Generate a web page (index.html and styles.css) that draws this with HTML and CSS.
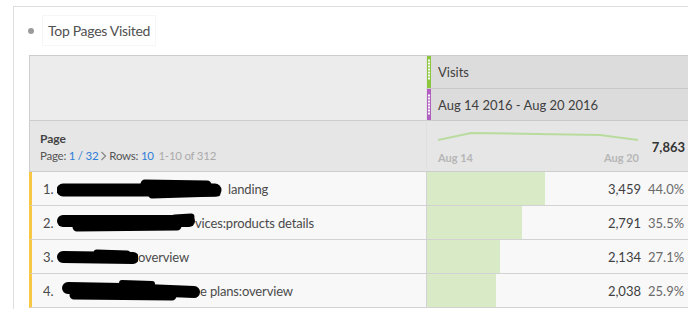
FILE: index.html
```html
<!DOCTYPE html>
<html>
<head>
<meta charset="utf-8">
<link rel="stylesheet" href="styles.css">
</head>
<body>
<div class="panel">
  <div class="title-row">
    <span class="dot"></span>
    <div class="title">Top Pages Visited</div>
  </div>
  <div class="table">
    <div class="hdr-left"></div>
    <div class="hdr-metric visits">
      <span class="cbar green"><i></i></span>
      <span>Visits</span>
    </div>
    <div class="hdr-metric seg">
      <span class="cbar purple"><i></i></span>
      <span>Aug 14 2016 - Aug 20 2016</span>
    </div>

    <div class="sum-left">
      <div class="dim">Page</div>
      <div class="pager">Page: <span class="link">1 / 32</span><svg class="chev" width="7" height="10" viewBox="0 0 7 10"><path d="M1.5 1 L5.5 5 L1.5 9" fill="none" stroke="#8a8a8a" stroke-width="1.3"/></svg>Rows: <span class="link">10</span> <span class="muted">1-10 of 312</span></div>
    </div>
    <div class="sum-right">
      <div class="spark">
        <svg width="201" height="12" viewBox="0 0 201 12"><polyline points="0,10 33,3 98,4 162,5 200,10" fill="none" stroke="#b9dc9e" stroke-width="2"/></svg>
        <div class="labels"><span>Aug 14</span><span>Aug 20</span></div>
      </div>
      <div class="total">7,863</div>
    </div>

    <div class="row-left">
      <span class="num">1.</span>
      <svg class="blob" width="171" height="24" viewBox="0 0 171 24"><path d="M6 13 L158 13" stroke="#000" stroke-width="13" stroke-linecap="round"/><path d="M88 7 L150 8" stroke="#000" stroke-width="9" stroke-linecap="round"/><path d="M95 18 L160 16" stroke="#000" stroke-width="7" stroke-linecap="round"/></svg><span>landing</span>
    </div>
    <div class="row-right">
      <div class="bar" style="width:118px"></div>
      <div class="vals"><span class="val">3,459</span><span class="pct">44.0%</span></div>
    </div>

    <div class="row-left">
      <span class="num">2.</span>
      <svg class="blob" width="138" height="24" viewBox="0 0 138 24"><path d="M6 10 L132 10" stroke="#000" stroke-width="12" stroke-linecap="round"/><path d="M20 16 L120 15" stroke="#000" stroke-width="9" stroke-linecap="round"/><path d="M118 7 L134 6" stroke="#000" stroke-width="7" stroke-linecap="round"/></svg><span>vices:products details</span>
    </div>
    <div class="row-right">
      <div class="bar" style="width:95px"></div>
      <div class="vals"><span class="val">2,791</span><span class="pct">35.5%</span></div>
    </div>

    <div class="row-left">
      <span class="num">3.</span>
      <svg class="blob" width="81" height="24" viewBox="0 0 81 24"><path d="M6 12 L76 13" stroke="#000" stroke-width="12" stroke-linecap="round"/><path d="M40 8 L70 9" stroke="#000" stroke-width="7" stroke-linecap="round"/></svg><span>overview</span>
    </div>
    <div class="row-right">
      <div class="bar" style="width:73px"></div>
      <div class="vals"><span class="val">2,134</span><span class="pct">27.1%</span></div>
    </div>

    <div class="row-left">
      <span class="num">4.</span>
      <svg class="blob b4" width="138" height="26" viewBox="0 0 138 26"><path d="M6 10 L60 11 L132 14" stroke="#000" stroke-width="12" stroke-linecap="round"/><path d="M12 17 L110 18" stroke="#000" stroke-width="9" stroke-linecap="round"/><path d="M60 5 L90 6" stroke="#000" stroke-width="6" stroke-linecap="round"/></svg><span>e plans:overview</span>
    </div>
    <div class="row-right">
      <div class="bar" style="width:69px"></div>
      <div class="vals"><span class="val">2,038</span><span class="pct">25.9%</span></div>
    </div>
  </div>
</div>
</body>
</html>
```
FILE: styles.css
```css
html, body {
  margin: 0;
  padding: 0;
}
body {
  width: 688px;
  height: 309px;
  overflow: hidden;
  background: #fff;
  font-family: Lato, "Liberation Sans", sans-serif;
  color: #4b4b4b;
}
.panel {
  margin: 6px 0 0 13px;
  width: 700px;
  height: 303px;
  border-top: 1px solid #dedede;
  border-left: 1px solid #dedede;
}
.title-row {
  display: flex;
  align-items: center;
  padding: 8px 0 0 14px;
}
.dot {
  width: 6px;
  height: 6px;
  border-radius: 50%;
  background: #9a9a9a;
  margin-right: 8px;
}
.title {
  height: 31px;
  box-sizing: border-box;
  border: 1px solid #f6f6f6;
  padding: 0 5px;
  display: flex;
  align-items: center;
  font-size: 14px;
  letter-spacing: -0.3px;
  color: #505050;
}
.table {
  margin: 9px 0 0 15px;
  display: grid;
  grid-template-columns: 397px 262px;
  border-top: 1px solid #cdcdcd;
}
.hdr-left {
  grid-row: span 2;
  background: #ececec;
  border-left: 1px solid #cdcdcd;
  border-bottom: 1px solid #cdcdcd;
}
.hdr-metric {
  display: flex;
  align-items: center;
  background: #dcdcdc;
  border-left: 1px solid #e4e4e4;
  border-bottom: 1px solid #c9c9c9;
  font-size: 13px;
  color: #404040;
}
.visits { height: 32px; }
.seg { height: 31px; }
.cbar {
  align-self: stretch;
  width: 4px;
  margin-right: 7px;
  display: flex;
  flex-direction: column;
}
.cbar i {
  display: block;
  margin-top: 3px;
  height: 21px;
  background: radial-gradient(circle, #fff 0.9px, transparent 1.3px) center top / 4px 3px repeat-y;
}
.green { background: #8cc63f; }
.purple { background: #b15ec1; }
.purple i { margin-top: 5px; height: 21px; }

.sum-left, .sum-right {
  height: 51px;
  box-sizing: border-box;
  background: #e6e6e6;
  border-bottom: 1px solid #cdcdcd;
}
.sum-left {
  border-left: 1px solid #cdcdcd;
  padding: 10px 0 0 10px;
}
.dim {
  font-size: 12px;
  font-weight: bold;
  color: #444;
  line-height: 15px;
}
.pager {
  font-size: 11.5px;
  letter-spacing: -0.25px;
  color: #555;
  line-height: 16px;
  margin-top: 2px;
}
.link { color: #2f7ed8; }
.muted { color: #ababab; margin-left: 2px; }
.chev { margin: 0 2px 0 2px; vertical-align: -1px; }
.sum-right {
  border-left: 1px solid #e0e0e0;
  display: flex;
  align-items: flex-start;
  padding-left: 11px;
}
.spark {
  width: 201px;
  padding-top: 9px;
}
.spark svg { display: block; }
.labels {
  display: flex;
  justify-content: space-between;
  font-size: 11px;
  font-weight: bold;
  color: #b6b6b6;
  margin-top: 9px;
  line-height: 13px;
}
.total {
  margin-left: auto;
  margin-right: 3px;
  font-size: 13px;
  font-weight: bold;
  color: #333;
  margin-top: 18px;
}

.row-left, .row-right {
  height: 33px;
  background: #f8f8f8;
  border-bottom: 1px solid #d2d2d2;
}
.row-left {
  border-left: 3px solid #f8c744;
  display: flex;
  align-items: center;
  padding-left: 11px;
  font-size: 13px;
  letter-spacing: -0.15px;
  color: #4b4b4b;
}
.num { width: 14px; }
.blob { display: block; }
.b4 { margin-left: 5px; }
.row-right {
  border-left: 1px solid #d2d2d2;
  display: grid;
  grid-template-columns: 1fr;
}
.bar {
  grid-area: 1 / 1;
  background: #d8eac6;
  height: 33px;
}
.vals {
  grid-area: 1 / 1;
  display: flex;
  align-items: center;
  justify-content: flex-end;
  font-size: 13px;
}
.val {
  color: #3f3f3f;
}
.pct {
  width: 40px;
  margin-left: 7px;
  color: #6a6a6a;
}
```
